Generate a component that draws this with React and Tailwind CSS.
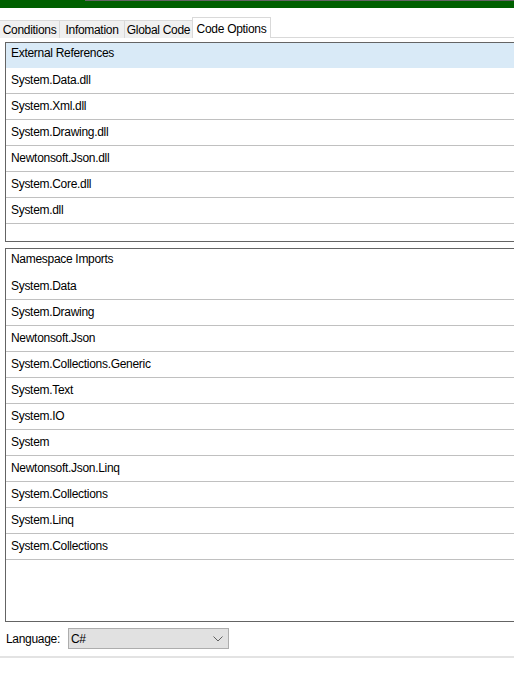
import React from 'react'

const references = [
  'System.Data.dll',
  'System.Xml.dll',
  'System.Drawing.dll',
  'Newtonsoft.Json.dll',
  'System.Core.dll',
  'System.dll',
]

const imports = [
  'System.Data',
  'System.Drawing',
  'Newtonsoft.Json',
  'System.Collections.Generic',
  'System.Text',
  'System.IO',
  'System',
  'Newtonsoft.Json.Linq',
  'System.Collections',
  'System.Linq',
  'System.Collections',
]

const tabs = [
  { label: 'Conditions', w: 'w-[59px]' },
  { label: 'Infomation', w: 'w-[65px]' },
  { label: 'Global Code', w: 'w-[68px]' },
]

const ListBox = ({ title, items, selected, height }) => (
  <div className={`ml-[5px] w-[520px] border border-r-0 border-[#646464] bg-white ${height}`}>
    <div className={`h-[25px] pl-[5px] pt-[2px] leading-[16px] ${selected ? 'bg-[#d9eaf7]' : ''}`}>
      {title}
    </div>
    {items.map((item, i) => (
      <div key={i} className="h-[26px] border-b border-[#c0c0c0] pl-[5px] pb-px flex items-center">
        {item}
      </div>
    ))}
  </div>
)

export default function App() {
  return (
    <div
      className="w-[514px] h-[687px] overflow-hidden bg-white text-[12px] tracking-[-0.3px] text-black"
      style={{ fontFamily: '"Liberation Sans", Arial, sans-serif' }}
    >
      {/* title strip */}
      <div className="h-[8px] bg-[#006000]">
        <div className="ml-[85px] h-px bg-[#646464]" />
      </div>

      {/* tabs */}
      <div className="mt-[9px] h-[21px] flex items-end border-b border-[#d9d9d9]">
        {tabs.map((t, i) => (
          <div
            key={t.label}
            className={`${t.w} h-[18px] -mb-px border-t border-l border-[#d9d9d9] bg-[#f0f0f0] flex items-center justify-center ${i === 0 ? 'border-l-0' : ''}`}
          >
            {t.label}
          </div>
        ))}
        <div className="w-[79px] h-[21px] -mb-px border border-b-0 border-[#d9d9d9] bg-white flex justify-center pt-[2px]">
          Code Options
        </div>
      </div>

      <div className="mt-[4px]">
        <ListBox title="External References" items={references} selected height="h-[200px]" />
      </div>
      <div className="mt-[6px]">
        <ListBox title="Namespace Imports" items={imports} height="h-[374px]" />
      </div>

      {/* language */}
      <div className="mt-[6px] flex items-center h-[21px]">
        <span className="ml-[6px] w-[62px]">Language:</span>
        <div className="w-[161px] h-[21px] border border-[#adadad] bg-[#e1e1e1] flex items-center justify-between pl-[2px] pr-[5px]">
          <span>C#</span>
          <svg width="10" height="6" viewBox="0 0 10 6" fill="none">
            <path d="M0.5 0.5 L5 5 L9.5 0.5" stroke="#606060" strokeWidth="1" />
          </svg>
        </div>
      </div>

      <div className="mt-[7px] h-[2px] bg-[#e3e3e3]" />
    </div>
  )
}
